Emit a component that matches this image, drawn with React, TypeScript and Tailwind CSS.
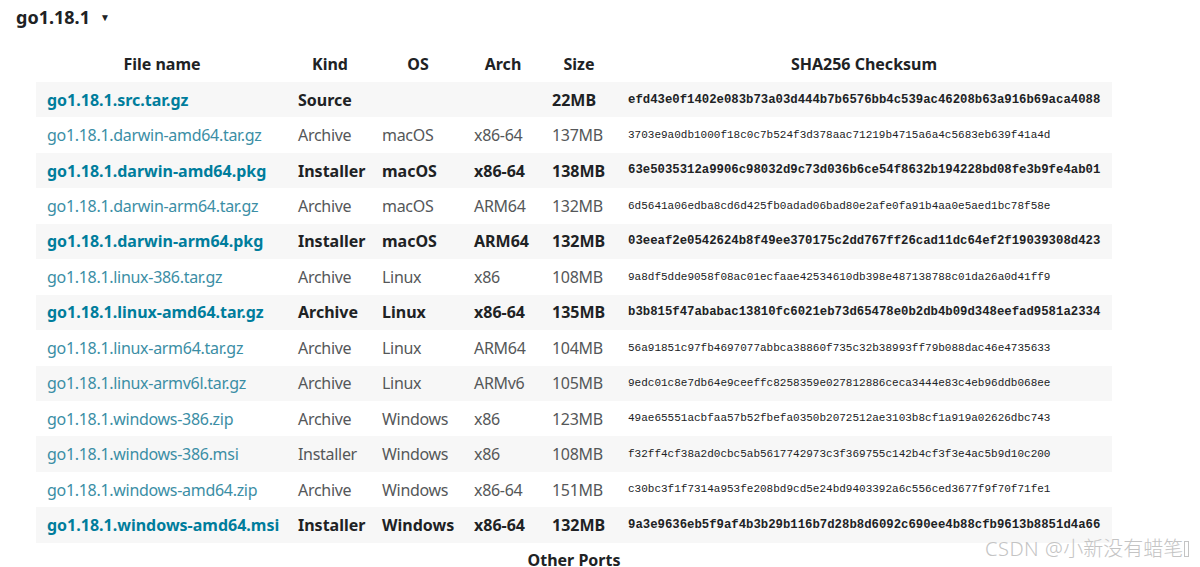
import React from "react";

type Row = { name: string; kind: string; os: string; arch: string; size: string; sum: string; bold: boolean };

const rows: Row[] = [
  { name: "go1.18.1.src.tar.gz", kind: "Source", os: "", arch: "", size: "22MB", sum: "efd43e0f1402e083b73a03d444b7b6576bb4c539ac46208b63a916b69aca4088", bold: true },
  { name: "go1.18.1.darwin-amd64.tar.gz", kind: "Archive", os: "macOS", arch: "x86-64", size: "137MB", sum: "3703e9a0db1000f18c0c7b524f3d378aac71219b4715a6a4c5683eb639f41a4d", bold: false },
  { name: "go1.18.1.darwin-amd64.pkg", kind: "Installer", os: "macOS", arch: "x86-64", size: "138MB", sum: "63e5035312a9906c98032d9c73d036b6ce54f8632b194228bd08fe3b9fe4ab01", bold: true },
  { name: "go1.18.1.darwin-arm64.tar.gz", kind: "Archive", os: "macOS", arch: "ARM64", size: "132MB", sum: "6d5641a06edba8cd6d425fb0adad06bad80e2afe0fa91b4aa0e5aed1bc78f58e", bold: false },
  { name: "go1.18.1.darwin-arm64.pkg", kind: "Installer", os: "macOS", arch: "ARM64", size: "132MB", sum: "03eeaf2e0542624b8f49ee370175c2dd767ff26cad11dc64ef2f19039308d423", bold: true },
  { name: "go1.18.1.linux-386.tar.gz", kind: "Archive", os: "Linux", arch: "x86", size: "108MB", sum: "9a8df5dde9058f08ac01ecfaae42534610db398e487138788c01da26a0d41ff9", bold: false },
  { name: "go1.18.1.linux-amd64.tar.gz", kind: "Archive", os: "Linux", arch: "x86-64", size: "135MB", sum: "b3b815f47ababac13810fc6021eb73d65478e0b2db4b09d348eefad9581a2334", bold: true },
  { name: "go1.18.1.linux-arm64.tar.gz", kind: "Archive", os: "Linux", arch: "ARM64", size: "104MB", sum: "56a91851c97fb4697077abbca38860f735c32b38993ff79b088dac46e4735633", bold: false },
  { name: "go1.18.1.linux-armv6l.tar.gz", kind: "Archive", os: "Linux", arch: "ARMv6", size: "105MB", sum: "9edc01c8e7db64e9ceeffc8258359e027812886ceca3444e83c4eb96ddb068ee", bold: false },
  { name: "go1.18.1.windows-386.zip", kind: "Archive", os: "Windows", arch: "x86", size: "123MB", sum: "49ae65551acbfaa57b52fbefa0350b2072512ae3103b8cf1a919a02626dbc743", bold: false },
  { name: "go1.18.1.windows-386.msi", kind: "Installer", os: "Windows", arch: "x86", size: "108MB", sum: "f32ff4cf38a2d0cbc5ab5617742973c3f369755c142b4cf3f3e4ac5b9d10c200", bold: false },
  { name: "go1.18.1.windows-amd64.zip", kind: "Archive", os: "Windows", arch: "x86-64", size: "151MB", sum: "c30bc3f1f7314a953fe208bd9cd5e24bd9403392a6c556ced3677f9f70f71fe1", bold: false },
  { name: "go1.18.1.windows-amd64.msi", kind: "Installer", os: "Windows", arch: "x86-64", size: "132MB", sum: "9a3e9636eb5f9af4b3b29b116b7d28b8d6092c690ee4b88cfb9613b8851d4a66", bold: true },
];

export default function App() {
  return (
    <div className="relative w-[1200px] h-[567px] overflow-hidden bg-white text-[#202224]" style={{ fontFamily: '"Noto Sans", "Open Sans", sans-serif' }}>
      <div className="pl-[16px] pt-[4px] flex items-center gap-[10px] h-[30px]">
        <span className="text-[18px] font-bold leading-none">go1.18.1</span>
        <span className="text-[10px] leading-none">▼</span>
      </div>
      <table className="ml-[36px] mt-[16px] border-collapse table-fixed w-[1076px] text-[16px]">
        <colgroup>
          <col className="w-[252px]" />
          <col className="w-[84px]" />
          <col className="w-[92px]" />
          <col className="w-[78px]" />
          <col className="w-[74px]" />
          <col className="w-[496px]" />
        </colgroup>
        <thead>
          <tr className="h-[36px]">
            <th className="font-bold text-center">File name</th>
            <th className="font-bold text-center">Kind</th>
            <th className="font-bold text-center">OS</th>
            <th className="font-bold text-center">Arch</th>
            <th className="font-bold text-center">Size</th>
            <th className="font-bold text-center">SHA256 Checksum</th>
          </tr>
        </thead>
        <tbody>
          {rows.map((r, i) => (
            <tr key={r.name} className={`h-[35.45px] ${i % 2 === 0 ? "bg-[#f7f7f7]" : "bg-white"} ${r.bold ? "font-bold" : "font-normal text-[#555759] tracking-[-0.3px]"}`}>
              <td className={`pl-[11px] whitespace-nowrap ${r.bold ? "text-[#007d9c]" : "text-[#3b8ea5]"}`}>{r.name}</td>
              <td className="pl-[10px] whitespace-nowrap">{r.kind}</td>
              <td className="pl-[10px] whitespace-nowrap">{r.os}</td>
              <td className="pl-[10px] whitespace-nowrap">{r.arch}</td>
              <td className="pl-[10px] whitespace-nowrap">{r.size}</td>
              <td
                className={`pl-[12px] whitespace-nowrap text-[#202224] tracking-normal ${r.bold ? "text-[12.3px]" : "text-[11px] font-normal"}`}
                style={{ fontFamily: '"Liberation Mono", "Courier New", monospace' }}
              >
                {r.sum}
              </td>
            </tr>
          ))}
        </tbody>
      </table>
      <div className="w-[1076px] ml-[36px] text-center font-bold text-[16px] leading-[22px] mt-[6px]">Other Ports</div>
      <div
        className="absolute left-[985px] top-[534px] text-[20px] font-light text-[#c4c4c4] whitespace-nowrap flex items-center"
        style={{ fontFamily: '"Noto Sans", "Noto Sans CJK SC", sans-serif' }}
      >
        <span className="tracking-[0.5px]">CSDN @</span>
        <span>小新没有蜡笔</span>
        <span className="inline-block w-[5px] h-[16px] border border-[#c4c4c4] ml-[1px]" />
      </div>
    </div>
  );
}
